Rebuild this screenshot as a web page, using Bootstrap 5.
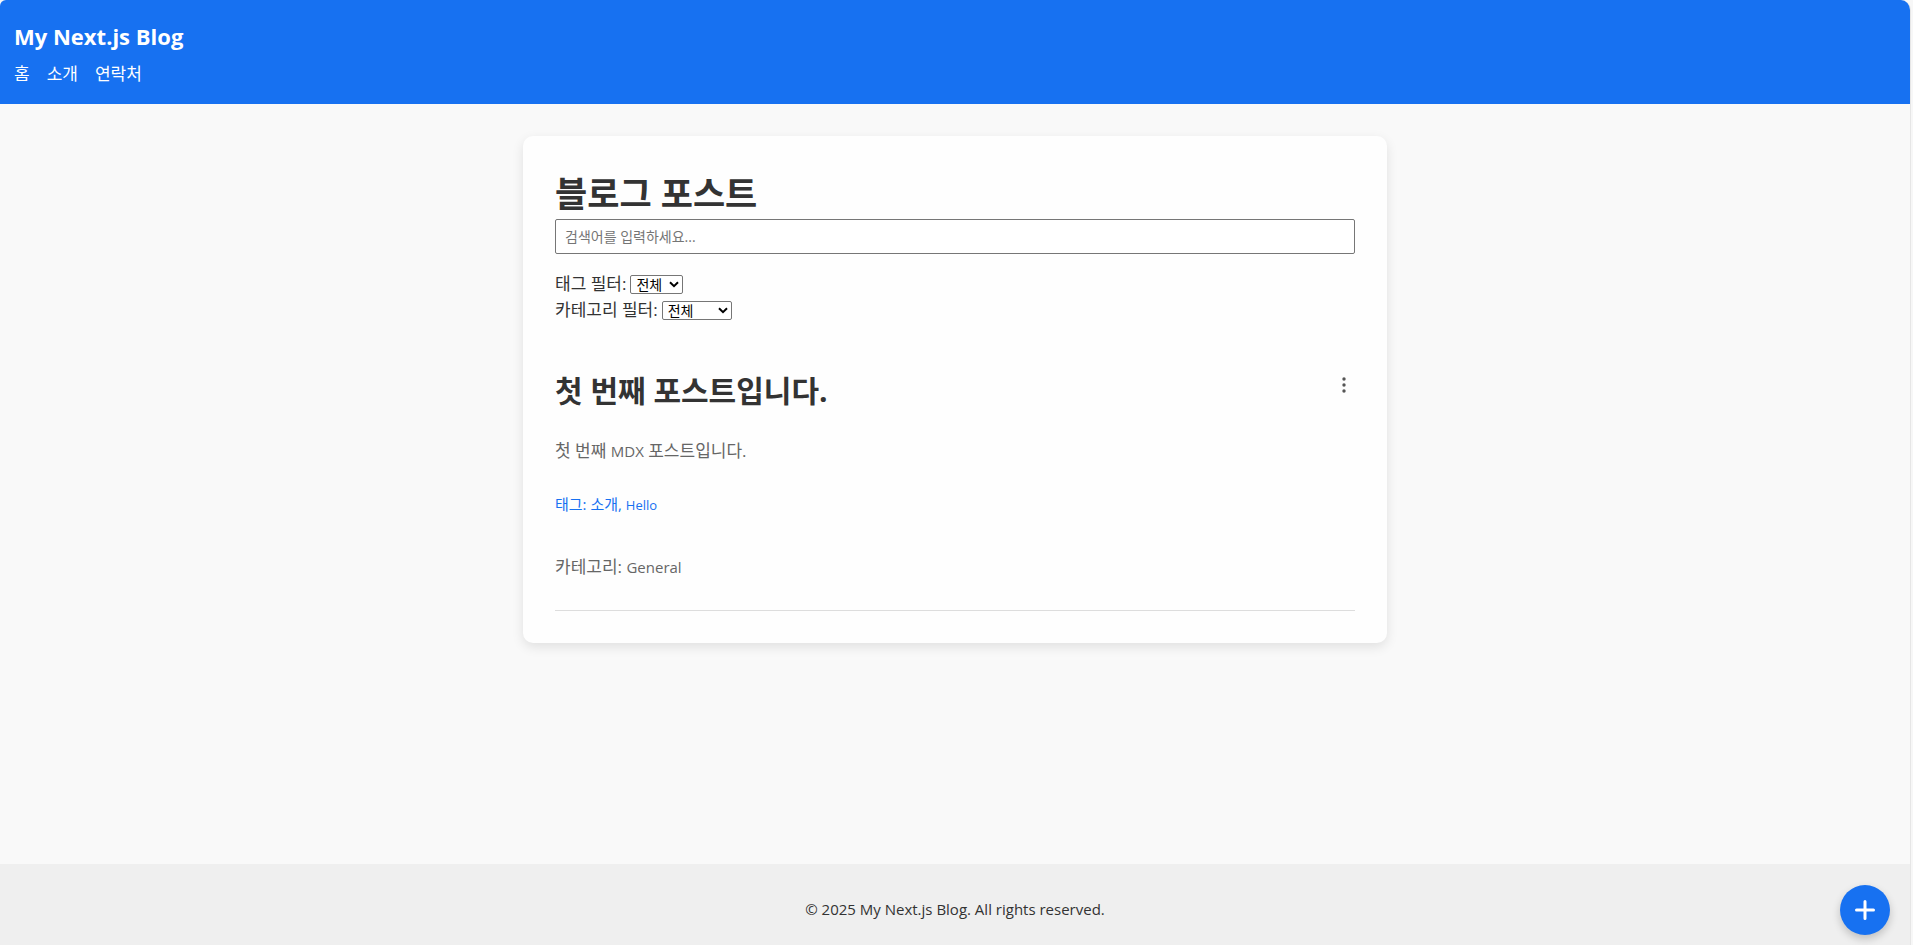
<!DOCTYPE html>
<html lang="ko">
<head>
<meta charset="utf-8">
<meta name="viewport" content="width=device-width, initial-scale=1">
<title>My Next.js Blog</title>
<link href="https://cdn.jsdelivr.net/npm/bootstrap@5.3.0/dist/css/bootstrap.min.css" rel="stylesheet">
<style>
  body { background: #f7f7f7; color: #333; font: 400 17px/26px "Open Sans", "Noto Sans CJK KR", sans-serif; }
  .site { background: #f9f9f9; margin-right: 2px; border-right: 1px solid #e6e6e6; border-radius: 6px 10px 0 0; overflow: hidden; }
  .site-header { background: #1771f1; padding: 15px 14px 13px; }
  .brand { font-size: 22px; line-height: 42px; font-weight: 700; }
  .site-nav { gap: 17px; line-height: 34px; }
  .post-panel { max-width: 864px; padding: 32px; margin: 32px auto; background: #fefefe; border-radius: 10px; box-shadow: 0 4px 12px rgba(0,0,0,.1); }
  .page-title { font-size: 35px; line-height: 51px; font-weight: 700; }
  .search-input { height: 35px; padding: 0 9px; border: 1px solid #767676; border-radius: 2px; font-size: 14px; background: #fff; }
  .search-input::placeholder { color: #757575; }
  .filters { padding-top: 1px; }
  .filter-row { gap: 4px; }
  .filter-row select {
    appearance: none; height: 19px; padding: 0 0 0 5px; border: 1px solid #767676; border-radius: 2px;
    color: #000; font-size: 14px; line-height: 17px;
    background: #fff url("data:image/svg+xml,%3Csvg xmlns='http://www.w3.org/2000/svg' width='10' height='7' viewBox='0 0 10 7'%3E%3Cpath d='M1 1.2l4 4 4-4' fill='none' stroke='%23000' stroke-width='2'/%3E%3C/svg%3E") no-repeat right 3px center;
  }
  .tag-select { width: 53px; }
  .category-select { width: 70px; }
  .post { margin-top: 45px; padding-bottom: 30px; border-bottom: 1px solid #ddd; }
  .post-title { font-size: 30px; line-height: 46px; font-weight: 700; }
  .post-text { color: #666; }
  .latin { font-size: 15px; }
  .post-tags { color: #1771f1; font-size: 15px; line-height: 25px; }
  .post-tags .latin { font-size: 13px; }
  .more-btn { width: 22px; height: 34px; color: #555; }
  .site-footer { background: #efefef; padding: 32px 16px 23px; font-size: 15px; }
  .fab { right: 23px; bottom: 10px; width: 50px; height: 50px; background: #1771f1; box-shadow: 0 4px 8px rgba(0,0,0,.2); }
</style>
</head>
<body>
<div class="site d-flex flex-column min-vh-100">
  <header class="site-header text-white">
    <h1 class="brand m-0">My Next.js Blog</h1>
    <nav class="site-nav d-flex">
      <a class="text-white text-decoration-none" href="#">홈</a>
      <a class="text-white text-decoration-none" href="#">소개</a>
      <a class="text-white text-decoration-none" href="#">연락처</a>
    </nav>
  </header>
  <main class="flex-grow-1 px-3 px-lg-0">
    <div class="post-panel">
      <h2 class="page-title m-0">블로그 포스트</h2>
      <input class="search-input d-block w-100 mb-3" type="text" placeholder="검색어를 입력하세요..." aria-label="검색어">
      <div class="filters">
        <div class="filter-row d-flex align-items-center">
          <label for="tag">태그 필터:</label>
          <select id="tag" class="tag-select"><option>전체</option><option>소개</option></select>
        </div>
        <div class="filter-row d-flex align-items-center">
          <label for="category">카테고리 필터:</label>
          <select id="category" class="category-select"><option>전체</option><option>General</option></select>
        </div>
      </div>
      <article class="post">
        <div class="d-flex justify-content-between align-items-start">
          <h3 class="post-title m-0">첫 번째 포스트입니다.</h3>
          <button class="more-btn btn p-0 border-0 d-flex align-items-center justify-content-center" type="button" aria-label="더보기">
            <svg width="4" height="16" viewBox="0 0 4 16" fill="currentColor"><circle cx="2" cy="2" r="1.7"/><circle cx="2" cy="8" r="1.7"/><circle cx="2" cy="14" r="1.7"/></svg>
          </button>
        </div>
        <p class="post-text mt-4 mb-0">첫 번째 <span class="latin">MDX</span> 포스트입니다.</p>
        <p class="post-tags my-4 py-1">태그: 소개, <span class="latin">Hello</span></p>
        <p class="post-text mt-4 mb-0 pt-2">카테고리: <span class="latin">General</span></p>
      </article>
    </div>
  </main>
  <footer class="site-footer text-center">© 2025 My Next.js Blog. All rights reserved.</footer>
</div>
<button class="fab btn position-fixed rounded-circle border-0 p-0 text-white d-flex align-items-center justify-content-center" type="button" aria-label="새 포스트">
  <svg width="20" height="20" viewBox="0 0 20 20" fill="none" stroke="currentColor" stroke-width="3" stroke-linecap="round"><path d="M10 1.5v17M1.5 10h17"/></svg>
</button>
<script src="https://cdn.jsdelivr.net/npm/bootstrap@5.3.0/dist/js/bootstrap.bundle.min.js"></script>
</body>
</html>
